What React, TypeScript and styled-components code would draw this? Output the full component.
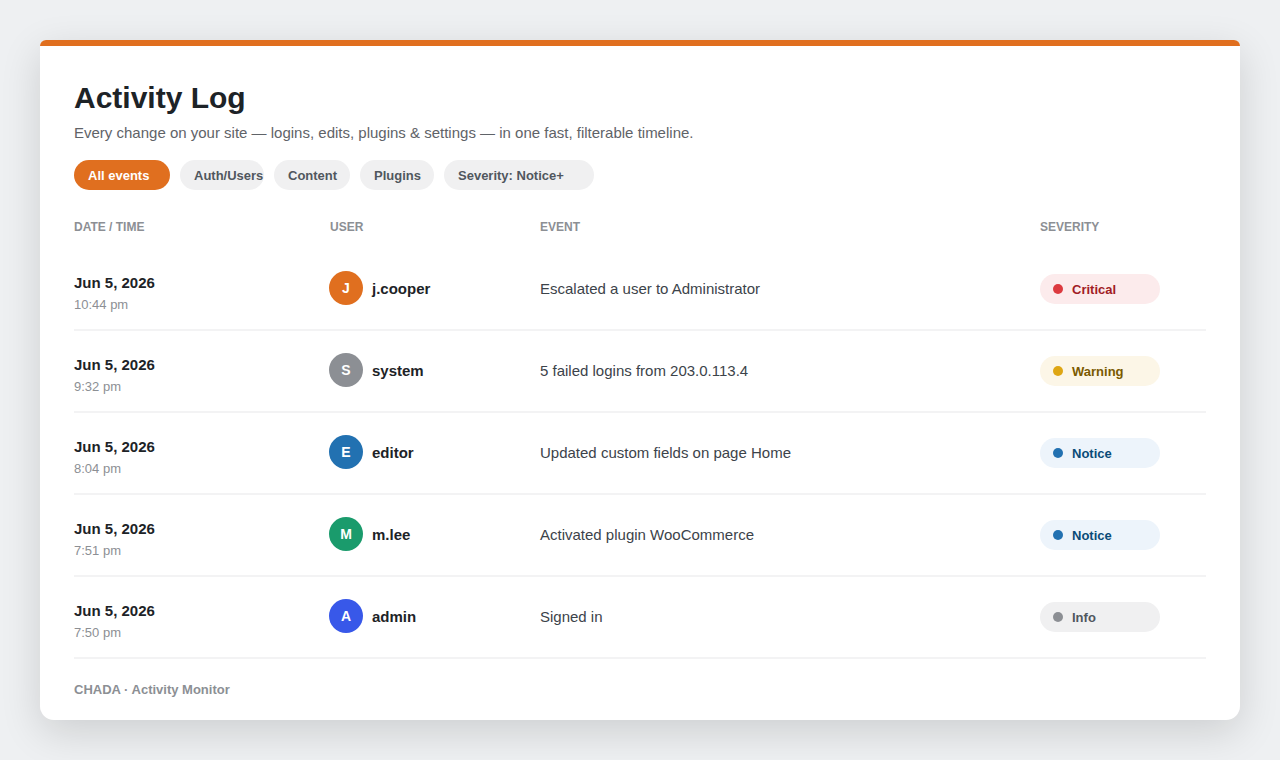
import React from "react";
import styled, { createGlobalStyle } from "styled-components";

const Global = createGlobalStyle`
  html, body { margin: 0; padding: 0; }
  body { background: #eef0f2; font-family: "Liberation Sans", Arial, sans-serif; }
  * { box-sizing: border-box; }
`;

const Page = styled.div`
  width: 1280px;
  height: 760px;
  padding: 40px;
  overflow: hidden;
`;

const Card = styled.main`
  height: 680px;
  background: #fff;
  border-radius: 6px 6px 14px 14px;
  box-shadow: 0 12px 40px rgba(0, 0, 0, 0.14);
  overflow: hidden;
`;

const AccentBar = styled.div`
  height: 6px;
  background: #e06f1f;
`;

const Body = styled.div`
  padding: 34px 34px 0;
`;

const Title = styled.h1`
  margin: 0;
  height: 36px;
  font-size: 30px;
  line-height: 36px;
  font-weight: 700;
  color: #1d2327;
`;

const Subtitle = styled.p`
  margin: 7px 0 0;
  font-size: 15px;
  line-height: 20px;
  color: #5f6368;
`;

const Filters = styled.div`
  display: flex;
  gap: 10px;
  margin-top: 17px;
`;

const Pill = styled.span<{ $w: number; $active?: boolean }>`
  width: ${(p) => p.$w}px;
  height: 30px;
  padding-left: 14px;
  border-radius: 15px;
  font-size: 13px;
  font-weight: 700;
  line-height: 31px;
  white-space: nowrap;
  background: ${(p) => (p.$active ? "#e06f1f" : "#f0f0f1")};
  color: ${(p) => (p.$active ? "#fff" : "#50575e")};
`;

const columns = "256px 210px 500px 166px";

const HeadRow = styled.div`
  display: grid;
  grid-template-columns: ${columns};
  margin-top: 29px;
  height: 30px;
  font-size: 12px;
  line-height: 16px;
  font-weight: 700;
  color: #8c8f94;
`;

const Row = styled.div`
  display: grid;
  grid-template-columns: ${columns};
  align-items: center;
  height: 82px;
  border-bottom: 2px solid #f3f3f4;
`;

const DateCell = styled.div`
  display: flex;
  flex-direction: column;
  gap: 5px;
  padding-top: 8px;
`;

const DateText = styled.span`
  font-size: 15px;
  line-height: 18px;
  font-weight: 700;
  color: #1d2327;
`;

const TimeText = styled.span`
  font-size: 13px;
  line-height: 16px;
  color: #8c8f94;
`;

const UserCell = styled.div`
  display: flex;
  align-items: center;
  gap: 9px;
  margin: 0 0 2px -1px;
`;

const Avatar = styled.span<{ $bg: string }>`
  display: flex;
  align-items: center;
  justify-content: center;
  width: 34px;
  height: 34px;
  border-radius: 50%;
  background: ${(p) => p.$bg};
  color: #fff;
  font-size: 14px;
  font-weight: 700;
`;

const UserName = styled.span`
  font-size: 15px;
  font-weight: 700;
  color: #1d2327;
`;

const EventText = styled.div`
  font-size: 15px;
  margin-bottom: 2px;
  color: #3c434a;
`;

const Badge = styled.span<{ $bg: string; $fg: string }>`
  display: flex;
  align-items: center;
  gap: 9px;
  width: 120px;
  height: 30px;
  padding-left: 13px;
  border-radius: 15px;
  background: ${(p) => p.$bg};
  color: ${(p) => p.$fg};
  font-size: 13px;
  font-weight: 700;
`;

const Dot = styled.i<{ $c: string }>`
  width: 10px;
  height: 10px;
  border-radius: 50%;
  background: ${(p) => p.$c};
`;

const Footer = styled.footer`
  margin-top: 23px;
  font-size: 13px;
  line-height: 16px;
  font-weight: 700;
  color: #8c8f94;
`;

const severities = {
  Critical: { bg: "#fcebec", fg: "#a11d26", dot: "#dc3a3f" },
  Warning: { bg: "#fcf6e7", fg: "#7a5a00", dot: "#dea614" },
  Notice: { bg: "#edf4fb", fg: "#0a4b78", dot: "#2271b1" },
  Info: { bg: "#f0f0f1", fg: "#50575e", dot: "#8c8f94" },
};

const filters = [
  { label: "All events", w: 96, active: true },
  { label: "Auth/Users", w: 84 },
  { label: "Content", w: 76 },
  { label: "Plugins", w: 74 },
  { label: "Severity: Notice+", w: 150 },
];

type Sev = keyof typeof severities;
const rows: { time: string; user: string; color: string; event: string; sev: Sev }[] = [
  { time: "10:44 pm", user: "j.cooper", color: "#e06f1f", event: "Escalated a user to Administrator", sev: "Critical" },
  { time: "9:32 pm", user: "system", color: "#8c8f94", event: "5 failed logins from 203.0.113.4", sev: "Warning" },
  { time: "8:04 pm", user: "editor", color: "#2271b1", event: "Updated custom fields on page Home", sev: "Notice" },
  { time: "7:51 pm", user: "m.lee", color: "#1a9b6c", event: "Activated plugin WooCommerce", sev: "Notice" },
  { time: "7:50 pm", user: "admin", color: "#3858e9", event: "Signed in", sev: "Info" },
];

export default function App() {
  return (
    <Page>
      <Global />
      <Card>
        <AccentBar />
        <Body>
          <Title>Activity Log</Title>
          <Subtitle>Every change on your site — logins, edits, plugins &amp; settings — in one fast, filterable timeline.</Subtitle>
          <Filters>
            {filters.map((f) => (
              <Pill key={f.label} $w={f.w} $active={f.active}>{f.label}</Pill>
            ))}
          </Filters>
          <HeadRow>
            <span>DATE / TIME</span>
            <span>USER</span>
            <span>EVENT</span>
            <span>SEVERITY</span>
          </HeadRow>
          {rows.map((r) => {
            const s = severities[r.sev];
            return (
              <Row key={r.time}>
                <DateCell>
                  <DateText>Jun 5, 2026</DateText>
                  <TimeText>{r.time}</TimeText>
                </DateCell>
                <UserCell>
                  <Avatar $bg={r.color}>{r.user[0].toUpperCase()}</Avatar>
                  <UserName>{r.user}</UserName>
                </UserCell>
                <EventText>{r.event}</EventText>
                <Badge $bg={s.bg} $fg={s.fg}>
                  <Dot $c={s.dot} />
                  {r.sev}
                </Badge>
              </Row>
            );
          })}
          <Footer>CHADA · Activity Monitor</Footer>
        </Body>
      </Card>
    </Page>
  );
}
